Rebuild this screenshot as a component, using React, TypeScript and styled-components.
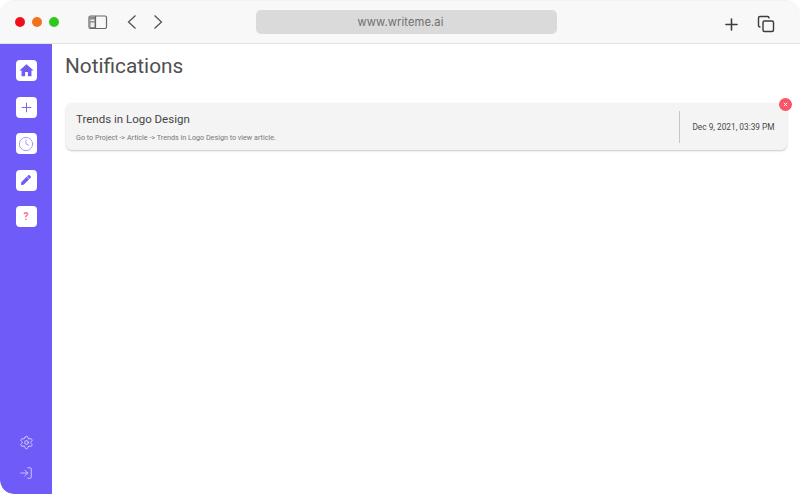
import styled, { createGlobalStyle } from 'styled-components';
import { Copy, LogIn, Plus, Settings, Clock } from 'lucide-react';
import { FaPen } from 'react-icons/fa';
import { MdHome } from 'react-icons/md';

const GlobalStyle = createGlobalStyle`
  html, body {
    margin: 0;
    padding: 0;
    background: #fff;
  }
  body {
    font-family: Roboto, "Liberation Sans", sans-serif;
  }
`;

const Window = styled.div`
  width: 800px;
  height: 494px;
  display: flex;
  flex-direction: column;
  overflow: hidden;
  background: #fff;
  border-radius: 14px 14px 0 14px;
`;

const Chrome = styled.header`
  height: 44px;
  flex-shrink: 0;
  display: grid;
  grid-template-columns: 256px 301px 1fr;
  align-items: center;
  background: #f8f8f8;
  border-top: 1px solid #f1f0fb;
  border-bottom: 1px solid #e2e2e2;
  box-sizing: border-box;
`;

const ChromeLeft = styled.div`
  display: flex;
  align-items: center;
  padding-left: 15px;
`;

const Light = styled.span<{ $color: string }>`
  width: 10px;
  height: 10px;
  margin-right: 7px;
  border-radius: 50%;
  background: radial-gradient(circle at 50% 55%, ${({ $color }) => $color} 55%, ${({ $color }) => $color}cc 100%);
`;

const SidebarToggle = styled.svg`
  margin-left: 22px;
  margin-right: 17px;
`;

const NavArrow = styled.svg`
  margin-right: 12px;
`;

const AddressBar = styled.div`
  height: 24px;
  padding-right: 12px;
  box-sizing: border-box;
  display: flex;
  align-items: center;
  justify-content: center;
  background: #dadada;
  border-radius: 5px;
  color: #6f6f6f;
  font-family: Inter, sans-serif;
  font-size: 11.2px;
  letter-spacing: 0.1px;
`;

const ChromeRight = styled.div`
  display: flex;
  align-items: center;
  justify-content: flex-end;
  gap: 16px;
  padding: 4px 25px 0 0;
  color: #3c3c3c;
`;

const Body = styled.div`
  flex: 1;
  min-height: 0;
  display: flex;
`;

const Sidebar = styled.nav`
  width: 52px;
  flex-shrink: 0;
  display: flex;
  flex-direction: column;
  align-items: center;
  padding: 16px 0 14px;
  box-sizing: border-box;
  background: #6f5cf8;
  border-bottom-left-radius: 14px;
`;

const NavList = styled.div`
  display: flex;
  flex-direction: column;
  gap: 15.5px;
`;

const NavButton = styled.div<{ $tint?: string }>`
  width: 21px;
  height: 21px;
  display: flex;
  align-items: center;
  justify-content: center;
  background: #fff;
  border-radius: 4px;
  color: ${({ $tint }) => $tint ?? '#6f5cf8'};
`;

const Help = styled.span`
  color: #f4708a;
  font-size: 10px;
  font-weight: 700;
`;

const FooterLinks = styled.div`
  margin-top: auto;
  display: flex;
  flex-direction: column;
  align-items: center;
  gap: 16px;
  color: #e8e4fe;
`;

const Main = styled.main`
  flex: 1;
  padding: 9px 13px 0 14px;
`;

const Title = styled.h1`
  margin: 0 0 24px -1px;
  color: #505050;
  font-size: 20.8px;
  font-weight: 400;
  line-height: 26px;
`;

const Card = styled.article`
  position: relative;
  height: 47px;
  display: flex;
  align-items: center;
  justify-content: space-between;
  background: #f4f4f4;
  border-radius: 6px;
  box-shadow: 0 1px 2px rgba(0, 0, 0, 0.22);
`;

const CardText = styled.div`
  padding-left: 10px;
`;

const CardTitle = styled.h2`
  margin: 0 0 6px;
  color: #454545;
  font-size: 11.5px;
  font-weight: 400;
  line-height: 15px;
`;

const CardHint = styled.p`
  margin: 0;
  color: #777;
  font-size: 7.2px;
  line-height: 9px;
`;

const CardDate = styled.time`
  width: 107px;
  height: 32px;
  display: flex;
  align-items: center;
  justify-content: center;
  border-left: 1px solid #c6c6c6;
  color: #484848;
  font-size: 8.3px;
`;

const Dismiss = styled.button`
  position: absolute;
  top: -5px;
  right: -5px;
  width: 13px;
  height: 13px;
  padding: 0;
  display: flex;
  align-items: center;
  justify-content: center;
  border: 0;
  border-radius: 50%;
  background: #fa5468;
`;

export default function App() {
  return (
    <>
      <GlobalStyle />
      <Window>
        <Chrome>
          <ChromeLeft>
            <Light $color="#f0101c" />
            <Light $color="#f2701e" />
            <Light $color="#2ec81e" />
            <SidebarToggle width="20" height="15" viewBox="0 0 20 15" fill="none" stroke="#666" strokeWidth="1.2">
              <rect x="1" y="1" width="17.5" height="12.5" rx="1.5" />
              <rect x="1.5" y="1.5" width="6" height="11.5" fill="#8a8a8a" stroke="none" />
              <rect x="2.5" y="4.5" width="4" height="1.6" fill="#eee" stroke="none" />
              <rect x="2.5" y="7.5" width="4" height="4.5" fill="#eee" stroke="none" />
              <path d="M7.5 1v12.5" />
            </SidebarToggle>
            <NavArrow width="14" height="16" viewBox="0 0 14 16" fill="none" stroke="#555" strokeWidth="1.3">
              <path d="M10.5 1.5 3.5 8l7 6.5" />
            </NavArrow>
            <NavArrow width="14" height="16" viewBox="0 0 14 16" fill="none" stroke="#555" strokeWidth="1.3">
              <path d="M3.5 1.5 10.5 8l-7 6.5" />
            </NavArrow>
          </ChromeLeft>
          <AddressBar>www.writeme.ai</AddressBar>
          <ChromeRight>
            <Plus size={19} strokeWidth={2} />
            <Copy size={18} strokeWidth={1.9} />
          </ChromeRight>
        </Chrome>
        <Body>
          <Sidebar>
            <NavList>
              <NavButton><MdHome size={17} /></NavButton>
              <NavButton><Plus size={15} strokeWidth={1.5} /></NavButton>
              <NavButton $tint="#9a8dfa"><Clock size={16} strokeWidth={1.3} /></NavButton>
              <NavButton><FaPen size={10} /></NavButton>
              <NavButton><Help>?</Help></NavButton>
            </NavList>
            <FooterLinks>
              <Settings size={15} strokeWidth={1.3} />
              <LogIn size={14} strokeWidth={1.3} />
            </FooterLinks>
          </Sidebar>
          <Main>
            <Title>Notifications</Title>
            <Card>
              <CardText>
                <CardTitle>Trends in Logo Design</CardTitle>
                <CardHint>Go to Project -&gt; Article -&gt; Trends in Logo Design to view article.</CardHint>
              </CardText>
              <CardDate>Dec 9, 2021, 03:39 PM</CardDate>
              <Dismiss aria-label="Dismiss">
                <svg width="5" height="5" viewBox="0 0 5 5" stroke="#fff" strokeWidth="1">
                  <path d="M.8.8l3.4 3.4M4.2.8.8 4.2" />
                </svg>
              </Dismiss>
            </Card>
          </Main>
        </Body>
      </Window>
    </>
  );
}
